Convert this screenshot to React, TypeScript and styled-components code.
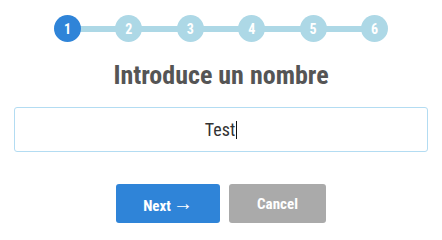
import React from 'react';
import styled, { createGlobalStyle } from 'styled-components';

const GlobalStyle = createGlobalStyle`
  html, body {
    margin: 0;
    padding: 0;
    background: #ffffff;
  }
  body {
    font-family: 'Roboto Condensed', Roboto, 'Liberation Sans', sans-serif;
    font-stretch: condensed;
  }
`;

const steps = [1, 2, 3, 4, 5, 6];

const Wizard = styled.div`
  width: 442px;
  display: flex;
  flex-direction: column;
  align-items: center;
  padding-top: 15px;
`;

const Steps = styled.div`
  position: relative;
  width: 334px;
  display: flex;
  justify-content: space-between;
`;

const Track = styled.div`
  position: absolute;
  left: 13px;
  right: 13px;
  top: 11px;
  height: 6px;
  background: #add8e6;
`;

const Step = styled.div<{ $active?: boolean }>`
  position: relative;
  width: 27px;
  height: 27px;
  border-radius: 50%;
  background: ${(p) => (p.$active ? '#2f84d8' : '#add8e6')};
  color: #ffffff;
  font-family: Roboto, 'Liberation Sans', sans-serif;
  font-weight: 700;
  font-size: 14px;
  display: flex;
  align-items: center;
  justify-content: center;
`;

const Title = styled.h2`
  margin: 18px 0 0;
  font-size: 26px;
  font-weight: 700;
  color: #555555;
  line-height: 30px;
`;

const Field = styled.div`
  box-sizing: border-box;
  width: 414px;
  height: 45px;
  margin-top: 17px;
  border: 1px solid #b3dcf2;
  border-radius: 3px;
  display: flex;
  align-items: center;
  justify-content: center;
  font-size: 18px;
  color: #333333;
  cursor: text;
`;

const Caret = styled.span`
  display: inline-block;
  width: 1px;
  height: 18px;
  margin-left: 1px;
  background: #111111;
`;

const Actions = styled.div`
  display: flex;
  gap: 9px;
  margin-top: 32px;
`;

const Button = styled.button<{ $variant: 'primary' | 'muted'; $w: number }>`
  width: ${(p) => p.$w}px;
  height: 39px;
  border: none;
  border-radius: 3px;
  background: ${(p) => (p.$variant === 'primary' ? '#2f84d8' : '#aaaaaa')};
  color: #ffffff;
  font-family: inherit;
  font-stretch: condensed;
  font-weight: 700;
  font-size: 15px;
  line-height: 18px;
  cursor: pointer;
`;

const Arrow = styled.span`
  font-family: 'Liberation Sans', sans-serif;
  font-weight: 400;
  font-size: 20px;
  line-height: 1;
  margin-left: 2px;
  vertical-align: 1px;
`;

export default function App() {
  return (
    <>
      <GlobalStyle />
      <Wizard>
        <Steps>
          <Track />
          {steps.map((n) => (
            <Step key={n} $active={n === 1}>
              {n}
            </Step>
          ))}
        </Steps>
        <Title>Introduce un nombre</Title>
        <Field role="textbox">
          Test
          <Caret />
        </Field>
        <Actions>
          <Button $variant="primary" $w={104}>
            Next<Arrow>→</Arrow>
          </Button>
          <Button $variant="muted" $w={97}>Cancel</Button>
        </Actions>
      </Wizard>
    </>
  );
}
